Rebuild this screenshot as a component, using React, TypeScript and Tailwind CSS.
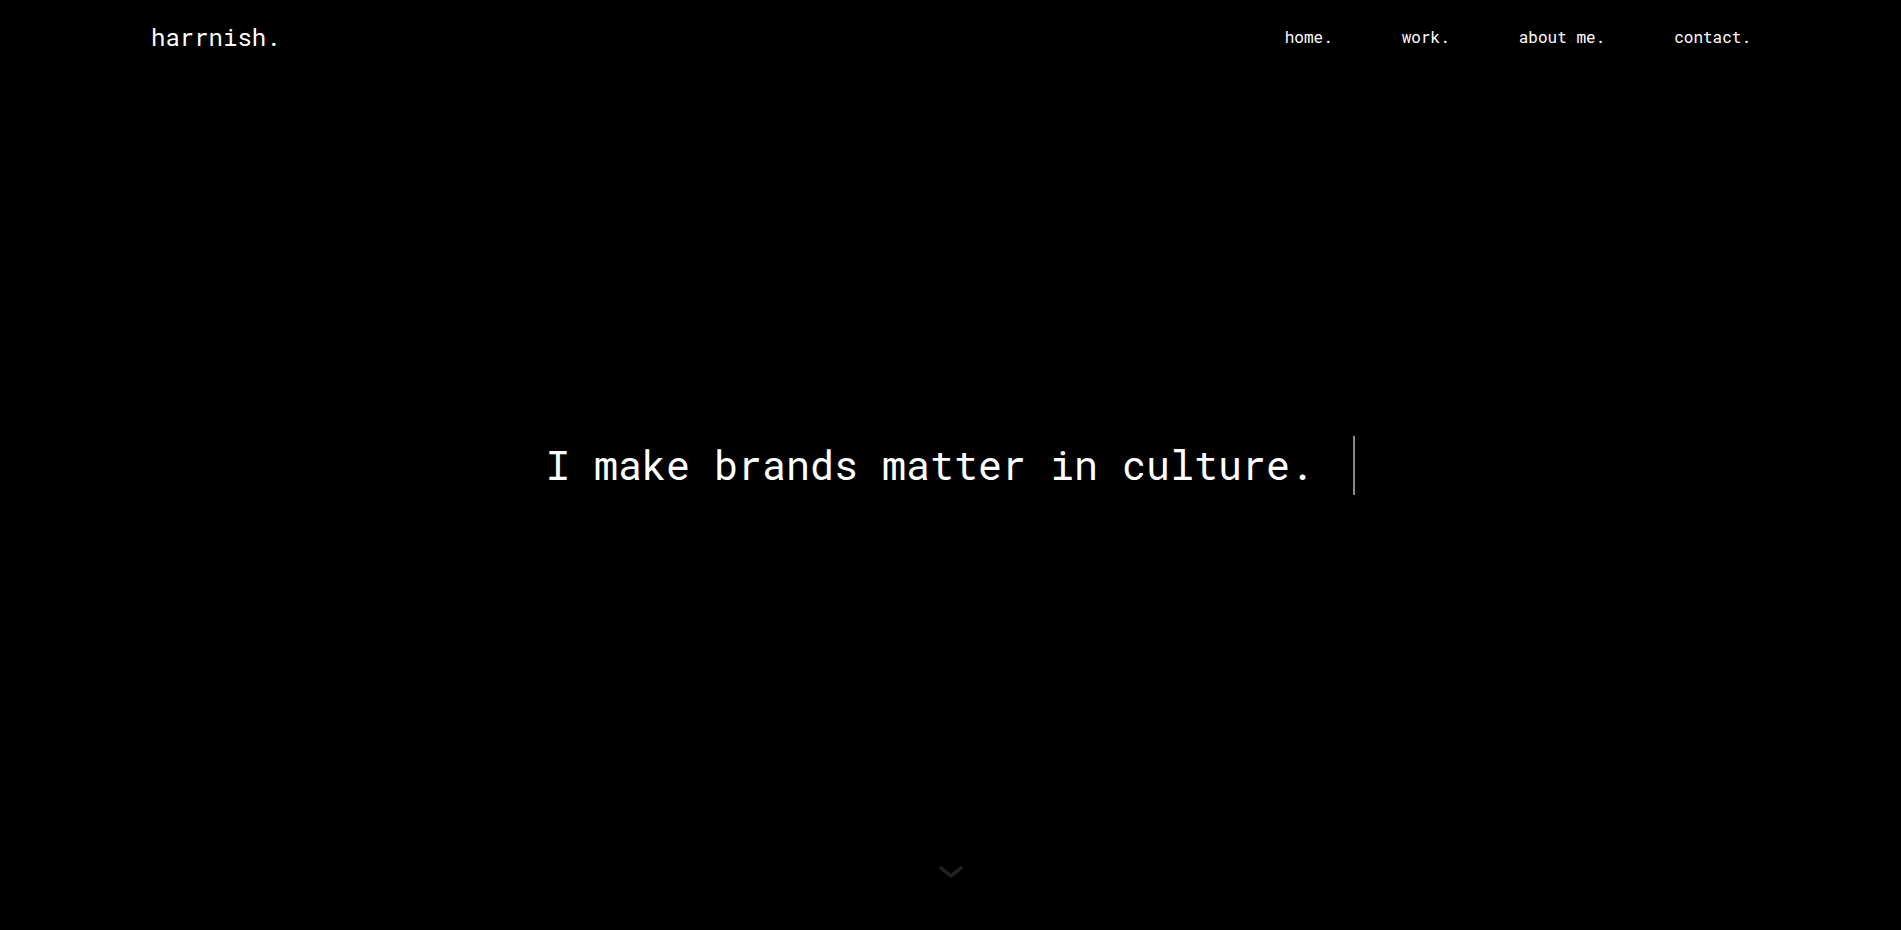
const links = ["home.", "work.", "about me.", "contact."];

const mono = "font-['Roboto_Mono','DejaVu_Sans_Mono','Liberation_Mono',monospace]";

export default function App() {
  return (
    <div className={`relative h-screen w-full overflow-hidden bg-black text-white ${mono}`}>
      {/* nav */}
      <header className="absolute inset-x-0 top-0 flex h-[74px] items-center justify-between pl-[151px] pr-[150px]">
        <a href="#" className="text-[24px] leading-none tracking-normal">
          harrnish.
        </a>
        <nav className="flex items-center gap-[69px] text-[16px] leading-none">
          {links.map((l) => (
            <a key={l} href="#" className="text-white">
              {l}
            </a>
          ))}
        </nav>
      </header>

      {/* hero */}
      <section className="flex h-full items-center justify-center">
        <h1 className="flex items-center text-[40px] leading-none">
          <span>I make brands matter in culture.</span>
          <span className="ml-[39px] inline-block h-[59px] w-[2px] bg-[#8a8a8a]" />
        </h1>
      </section>

      {/* scroll hint */}
      <div className="absolute bottom-[51px] left-1/2 -translate-x-1/2">
        <svg width="26" height="14" viewBox="0 0 26 14" fill="none">
          <polyline
            points="3,3 13,11 23,3"
            stroke="#222222"
            strokeWidth="3.5"
            strokeLinecap="round"
            strokeLinejoin="round"
          />
        </svg>
      </div>
    </div>
  );
}
